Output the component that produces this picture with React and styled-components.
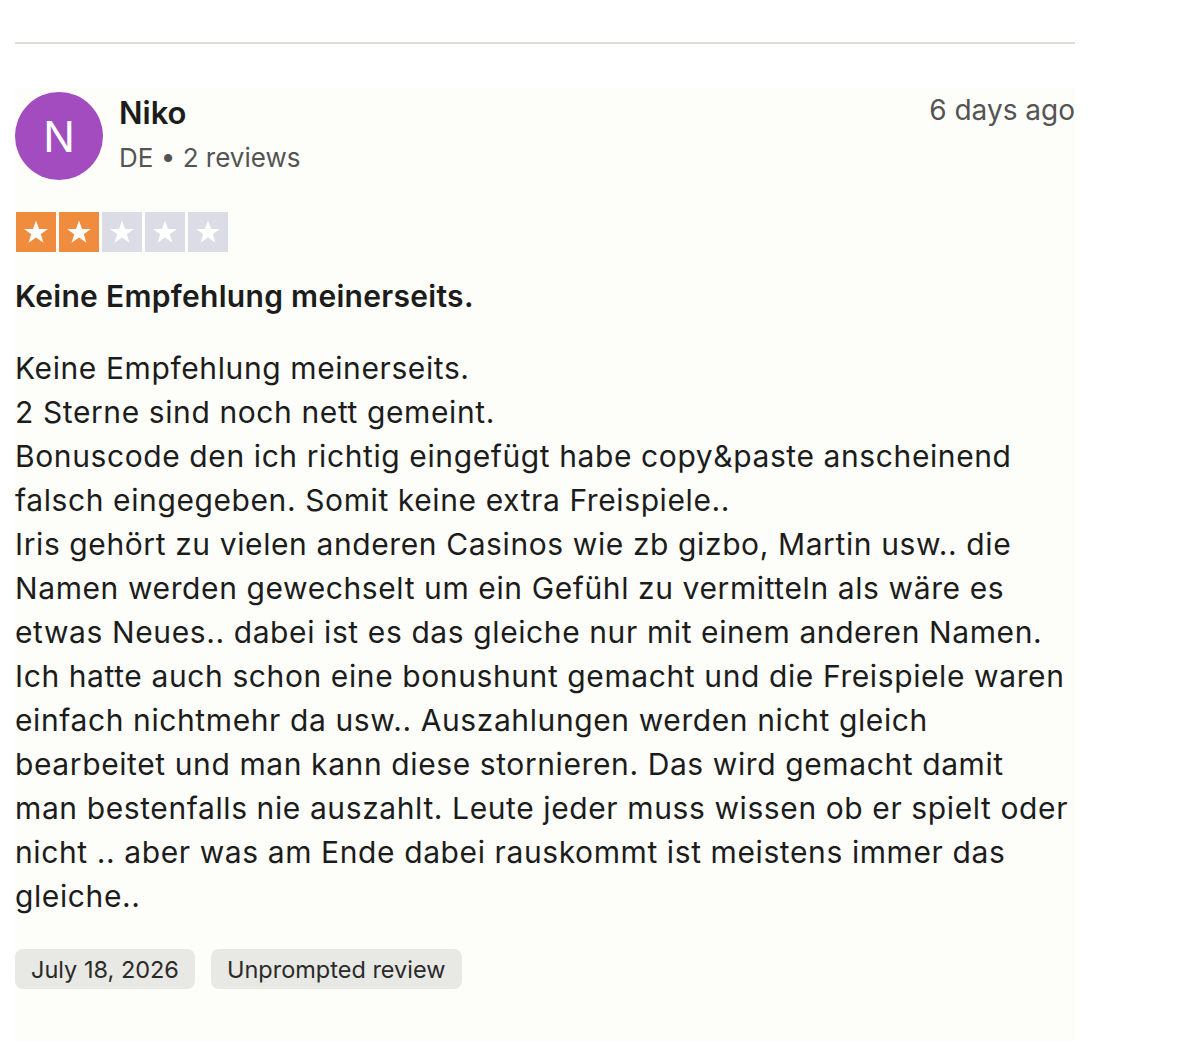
import React from "react"
import styled, { createGlobalStyle } from "styled-components"

const GlobalStyle = createGlobalStyle`
  html, body {
    margin: 0;
    padding: 0;
    background: #ffffff;
  }
  body {
    font-family: Inter, "Noto Sans", "Liberation Sans", sans-serif;
    color: #1c1c1c;
  }
`

const Page = styled.div`
  width: 1060px;
  padding: 42px 0 0 15px;
`

const Divider = styled.hr`
  margin: 0;
  border: none;
  border-top: 2px solid #dcdcd8;
`

const Card = styled.article`
  margin-top: 44px;
  background: #fdfdf9;
  padding: 4px 0 52px;
  display: flex;
  flex-direction: column;
`

const Header = styled.div`
  display: flex;
  align-items: flex-start;
  gap: 16px;
`

const Avatar = styled.div`
  width: 88px;
  height: 88px;
  border-radius: 50%;
  background: #a24cc0;
  color: #ffffff;
  display: flex;
  align-items: center;
  justify-content: center;
  font-size: 42px;
  font-weight: 400;
  flex-shrink: 0;
`

const Who = styled.div`
  flex: 1;
  display: flex;
  flex-direction: column;
  padding-top: 2px;
`

const Name = styled.div`
  font-size: 31px;
  font-weight: 600;
  line-height: 38px;
  color: #1c1c1c;
`

const Meta = styled.div`
  font-size: 26px;
  line-height: 40px;
  color: #545454;
  margin-top: 6px;
`

const Ago = styled.div`
  font-size: 28px;
  line-height: 36px;
  color: #545454;
`

const Stars = styled.div`
  display: flex;
  gap: 3px;
  margin-top: 32px;
  margin-left: 1px;
`

const StarBox = styled.div`
  width: 40px;
  height: 40px;
  background: ${p => (p.$on ? "#f08c3d" : "#dcdce6")};
  display: flex;
  align-items: center;
  justify-content: center;
`

const Title = styled.h2`
  margin: 24px 0 0;
  font-size: 30px;
  font-weight: 600;
  line-height: 40px;
  letter-spacing: 0.3px;
  color: #1c1c1c;
`

const Body = styled.div`
  margin-top: 30px;
  font-size: 30px;
  line-height: 44px;
  letter-spacing: 0.6px;
  color: #1c1c1c;
`

const Line = styled.span`
  display: block;
  white-space: nowrap;
`

const Tags = styled.div`
  display: flex;
  gap: 16px;
  margin-top: 31px;
`

const Tag = styled.span`
  background: #e8e8e4;
  border-radius: 8px;
  padding: 0 16px;
  height: 40px;
  display: flex;
  align-items: center;
  font-size: 23.5px;
  color: #2a2a2a;
`

const Star = ({ on }) => (
  <StarBox $on={on}>
    <svg width="28" height="28" viewBox="0 0 24 24">
      <path
        d="M12 2.2l2.6 7.2h7.6l-6.1 4.5 2.3 7.3L12 16.8l-6.4 4.4 2.3-7.3L1.8 9.4h7.6z"
        fill="#ffffff"
      />
    </svg>
  </StarBox>
)

const lines = [
  "Keine Empfehlung meinerseits.",
  "2 Sterne sind noch nett gemeint.",
  "Bonuscode den ich richtig eingefügt habe copy&paste anscheinend",
  "falsch eingegeben. Somit keine extra Freispiele..",
  "Iris gehört zu vielen anderen Casinos wie zb gizbo, Martin usw.. die",
  "Namen werden gewechselt um ein Gefühl zu vermitteln als wäre es",
  "etwas Neues.. dabei ist es das gleiche nur mit einem anderen Namen.",
  "Ich hatte auch schon eine bonushunt gemacht und die Freispiele waren",
  "einfach nichtmehr da usw.. Auszahlungen werden nicht gleich",
  "bearbeitet und man kann diese stornieren. Das wird gemacht damit",
  "man bestenfalls nie auszahlt. Leute jeder muss wissen ob er spielt oder",
  "nicht .. aber was am Ende dabei rauskommt ist meistens immer das",
  "gleiche..",
]

export default function App() {
  const rating = 2
  return (
    <>
      <GlobalStyle />
      <Page>
        <Divider />
        <Card>
          <Header>
            <Avatar>N</Avatar>
            <Who>
              <Name>Niko</Name>
              <Meta>DE • 2 reviews</Meta>
            </Who>
            <Ago>6 days ago</Ago>
          </Header>
          <Stars>
            {[1, 2, 3, 4, 5].map(i => (
              <Star key={i} on={i <= rating} />
            ))}
          </Stars>
          <Title>Keine Empfehlung meinerseits.</Title>
          <Body>
            {lines.map((l, i) => (
              <Line key={i}>{l}</Line>
            ))}
          </Body>
          <Tags>
            <Tag>July 18, 2026</Tag>
            <Tag>Unprompted review</Tag>
          </Tags>
        </Card>
      </Page>
    </>
  )
}
